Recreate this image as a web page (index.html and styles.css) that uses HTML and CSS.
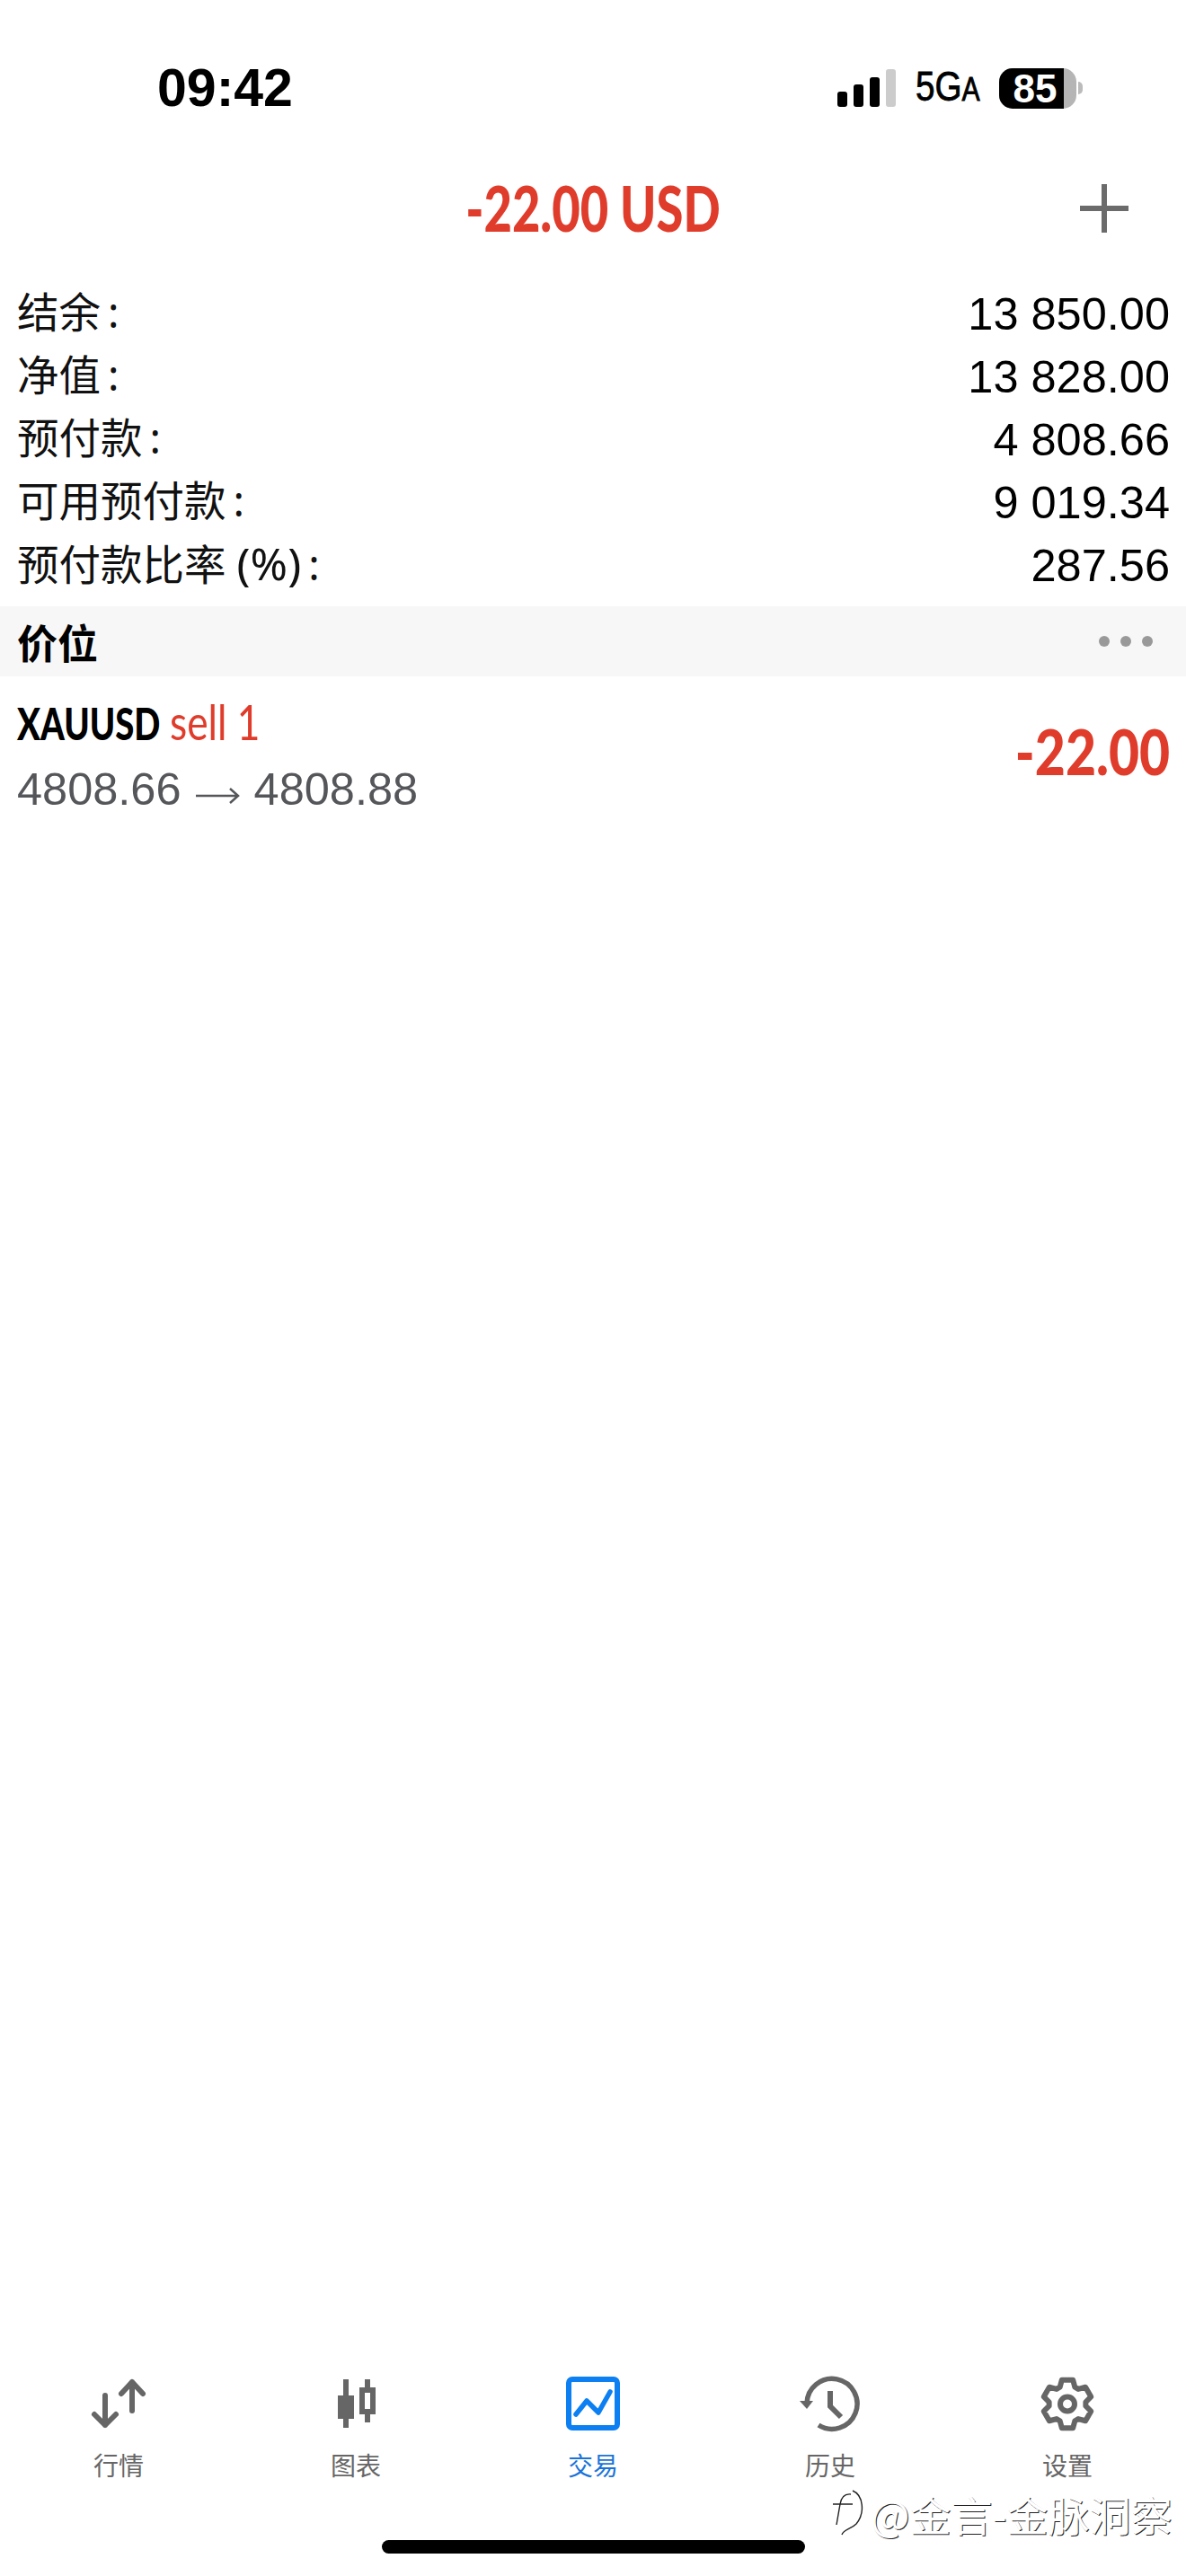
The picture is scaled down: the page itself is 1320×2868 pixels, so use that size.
FILE: index.html
```html
<!DOCTYPE html>
<html lang="en">
<head>
  <meta charset="UTF-8">
  <meta name="viewport" content="width=device-width, initial-scale=1.0">
  <title>交易</title>
  <link rel="stylesheet" href="styles.css">
</head>
<body>

  <div class="page">

    <!-- status bar -->
    <div class="status">
      <div class="time">09:42</div>
      <div class="status-right">
        <div class="signal">
          <span class="bar bar-1"></span>
          <span class="bar bar-2"></span>
          <span class="bar bar-3"></span>
          <span class="bar bar-4"></span>
        </div>
        <div class="network"><div class="network-text">5G<span class="network-small">A</span></div></div>
        <div class="battery">
          <div class="battery-body">
            <div class="battery-level">85</div>
          </div>
          <div class="battery-nub"></div>
        </div>
      </div>
    </div>

    <!-- header -->
    <div class="header">
      <div class="header-title">-22.00 USD</div>
      <svg class="header-plus" width="54" height="54" viewBox="0 0 54 54">
        <path d="M27 0V54M0 27H54" stroke="#6b6b6b" stroke-width="6" fill="none"/>
      </svg>
    </div>

    <!-- account summary -->
    <div class="summary">
      <div class="summary-row"><span class="label">结余<span class="colon">:</span></span><span class="value">13 850.00</span></div>
      <div class="summary-row"><span class="label">净值<span class="colon">:</span></span><span class="value">13 828.00</span></div>
      <div class="summary-row"><span class="label">预付款<span class="colon">:</span></span><span class="value">4 808.66</span></div>
      <div class="summary-row"><span class="label">可用预付款<span class="colon">:</span></span><span class="value">9 019.34</span></div>
      <div class="summary-row"><span class="label">预付款比率 <span class="percent">(%)</span><span class="colon">:</span></span><span class="value">287.56</span></div>
    </div>

    <!-- positions -->
    <div class="section">
      <div class="section-title">价位</div>
      <div class="dots"><span></span><span></span><span></span></div>
    </div>

    <div class="position">
      <div class="position-info">
        <div class="position-name"><span class="position-symbol">XAUUSD</span><span class="position-side">sell 1</span></div>
        <div class="position-price">4808.66
          <svg class="arrow" width="49" height="20" viewBox="0 0 49 20">
            <path d="M0 10H47M38 2L47 10L38 18" fill="none" stroke="#55565a" stroke-width="2.5"/>
          </svg>
          4808.88</div>
      </div>
      <div class="position-profit">-22.00</div>
    </div>

    <!-- bottom tabs -->
    <div class="tabs">
      <div class="tab">
        <svg class="tab-icon" width="72" height="64" viewBox="0 0 72 64">
          <g fill="none" stroke="#666" stroke-width="6" stroke-linecap="round" stroke-linejoin="round">
            <path d="M21 22V55M9 43L21 55L33 43"/>
            <path d="M51 39V7M39 20L51 7L63 20"/>
          </g>
        </svg>
        <div class="tab-label">行情</div>
      </div>
      <div class="tab">
        <svg class="tab-icon" width="72" height="64" viewBox="0 0 72 64">
          <path fill="#666" d="M22 4H28V22H34V48H28V58H22V48H16V22H22Z"/>
          <path fill="#666" fill-rule="evenodd" d="M46 4H52V13H58V43H52V52H46V43H40V13H46ZM46 19V37H52V19Z"/>
        </svg>
        <div class="tab-label">图表</div>
      </div>
      <div class="tab tab-active">
        <svg class="tab-icon" width="72" height="64" viewBox="0 0 72 64">
          <rect x="9" y="4" width="54" height="54" rx="4" fill="none" stroke="#0c7ff2" stroke-width="6"/>
          <path d="M17 43L29 28L42 41L55 18" fill="none" stroke="#0c7ff2" stroke-width="5.5" stroke-linecap="round" stroke-linejoin="round"/>
        </svg>
        <div class="tab-label">交易</div>
      </div>
      <div class="tab">
        <svg class="tab-icon" width="72" height="64" viewBox="0 0 72 64">
          <path d="M10 31A28 28 0 1 1 23 55" fill="none" stroke="#666" stroke-width="5.5"/>
          <path d="M2 28H17L10 37Z" fill="#666"/>
          <path d="M36 17V34L48 46" fill="none" stroke="#666" stroke-width="6"/>
        </svg>
        <div class="tab-label">历史</div>
      </div>
      <div class="tab">
        <svg class="tab-icon" width="72" height="64" viewBox="0 0 72 64">
          <path fill="none" stroke="#666" stroke-width="6" stroke-linejoin="round" d="M27.66 12.77L29.81 4.71H42.19L44.34 12.77L48.05 14.92L56.11 12.74L62.3 23.46L56.39 29.36V33.64L62.3 39.54L56.11 50.26L48.05 48.08L44.34 50.23L42.19 58.29H29.81L27.66 50.23L23.95 48.08L15.89 50.26L9.7 39.54L15.61 33.64V29.36L9.7 23.46L15.89 12.74L23.95 14.92Z"/>
          <circle cx="36" cy="31.5" r="8" fill="none" stroke="#666" stroke-width="6"/>
        </svg>
        <div class="tab-label">设置</div>
      </div>
    </div>

    <div class="home-bar"></div>

    <!-- watermark over the tabs -->
    <div class="watermark">
      <svg class="watermark-logo" width="38" height="52" viewBox="0 0 38 52">
        <path d="M24 1C36 6 38 26 28 38C22 44 14 44 12 50" fill="none" stroke="#222" stroke-width="1.4"/>
        <path d="M22 5C14 4 11 10 10 16L6 39M2 16H24" fill="none" stroke="#222" stroke-width="1.4"/>
      </svg>
      <span class="watermark-text">@金言-金脉洞察</span>
    </div>

  </div>

</body>
</html>
```

FILE: styles.css
```css
body {
  margin: 0;
  padding: 0;
  background-color: #ffffff;
  color: #000000;
  font-family: "Liberation Sans", "Noto Sans CJK SC", sans-serif;
}

.page {
  position: relative;
  width: 1320px;
  height: 2868px;
  display: flex;
  flex-direction: column;
  overflow: hidden;
}

/* status bar */
.status {
  display: flex;
  justify-content: space-between;
  align-items: center;
  height: 60px;
  margin-top: 68px;
  padding: 0 115px 0 175px;
}

.time {
  font-size: 59px;
  font-weight: 700;
  line-height: 60px;
}

.status-right {
  display: flex;
  align-items: center;
}

.signal {
  display: flex;
  align-items: flex-end;
  gap: 7px;
  height: 42px;
  margin-right: 22px;
}

.bar {
  width: 11px;
  border-radius: 3px;
  background-color: #000000;
}

.bar-1 { height: 17px; }
.bar-2 { height: 25px; }
.bar-3 { height: 33px; }
.bar-4 { height: 42px; background-color: #cccccc; }

.network {
  width: 72px;
  margin-right: 21px;
}

.network-text {
  font-size: 46px;
  line-height: 46px;
  white-space: nowrap;
  -webkit-text-stroke: 0.8px #000000;
  transform: scaleX(0.84);
  transform-origin: left center;
}

.network-small {
  font-size: 36px;
}

.battery {
  display: flex;
  align-items: center;
  gap: 2px;
}

.battery-body {
  width: 86px;
  height: 45px;
  border-radius: 15px;
  background-color: #b5b5b5;
}

.battery-level {
  width: 72px;
  height: 45px;
  border-radius: 15px 0 0 15px;
  background-color: #000000;
  color: #ffffff;
  font-size: 44px;
  font-weight: 700;
  line-height: 45px;
  text-align: center;
  text-indent: 8px;
}

.battery-nub {
  width: 5px;
  height: 14px;
  border-radius: 0 5px 5px 0;
  background-color: #bbbbbb;
}

/* header */
.header {
  display: grid;
  grid-template-columns: 1fr auto 1fr;
  align-items: center;
  height: 110px;
  margin-top: 49px;
  padding-right: 64px;
}

.header-title {
  grid-column: 2;
  font-family: "Lato", sans-serif;
  font-size: 70px;
  font-weight: 900;
  color: #e03c2b;
  margin-top: -3px;
  margin-left: 64px;
  transform: scaleX(0.775);
}

.header-plus {
  grid-column: 3;
  justify-self: end;
}

/* summary */
.summary {
  margin-top: 27px;
  padding: 0 18px 0 19px;
}

.summary-row {
  display: flex;
  justify-content: space-between;
  align-items: center;
  height: 70px;
}

.label {
  font-family: "Noto Sans", "Noto Sans CJK SC", sans-serif;
  font-size: 46.5px;
  line-height: 66px;
  margin-top: -4px;
  color: #111111;
}

.percent {
  font-size: 50px;
}

.colon {
  margin-left: 8px;
}

.value {
  font-size: 50.5px;
}

/* positions */
.section {
  display: flex;
  justify-content: space-between;
  align-items: center;
  height: 78px;
  margin-top: 11px;
  padding: 0 18px 0 19px;
  background-color: #f7f7f7;
}

.section-title {
  font-family: "Noto Sans CJK SC", sans-serif;
  font-size: 45px;
  font-weight: 700;
}

.dots {
  display: flex;
  gap: 12px;
  padding-right: 19px;
}

.dots span {
  width: 12px;
  height: 12px;
  border-radius: 50%;
  background-color: #999999;
}

.position {
  display: flex;
  justify-content: space-between;
  align-items: center;
  height: 172px;
  padding: 0 18px 0 19px;
}

.position-info {
  padding-top: 5px;
}

.position-name {
  display: flex;
  align-items: baseline;
  font-family: "Lato", sans-serif;
  font-size: 50px;
  font-weight: 900;
  line-height: 72px;
  margin-bottom: 2px;
}

.position-symbol {
  display: block;
  transform: scaleX(0.765);
  transform-origin: left center;
  margin-right: -38px;
}

.position-side {
  display: block;
  font-size: 54px;
  font-weight: 400;
  color: #e03c2b;
  transform: scaleX(0.82);
  transform-origin: left center;
}

.position-price {
  font-size: 50.5px;
  line-height: 72px;
  color: #55565a;
}

.arrow {
  margin: 0 2px;
}

.position-profit {
  font-family: "Lato", sans-serif;
  font-size: 70px;
  font-weight: 900;
  color: #e03c2b;
  margin-top: -6px;
  transform: scaleX(0.84);
  transform-origin: right center;
}

/* tabs */
.tabs {
  display: flex;
  margin-top: auto;
}

.tab {
  flex: 1;
  display: flex;
  flex-direction: column;
  align-items: center;
}

.tab-icon {
  display: block;
}

.tab-label {
  margin-top: 17px;
  font-family: "Noto Sans CJK SC", sans-serif;
  font-size: 28px;
  line-height: 36px;
  color: #666666;
}

.tab-active .tab-label {
  color: #1a73d9;
}

.home-bar {
  width: 471px;
  height: 15px;
  margin: 66px auto 25px;
  border-radius: 8px;
  background-color: #000000;
}

/* watermark */
.watermark {
  position: absolute;
  left: 925px;
  top: 2772px;
  display: flex;
  align-items: center;
  gap: 6px;
}

.watermark-text {
  font-family: "Noto Sans CJK SC", sans-serif;
  font-size: 46px;
  line-height: 50px;
  color: #ffffff;
  text-shadow: 1px 1px 0 #222222;
}
```
